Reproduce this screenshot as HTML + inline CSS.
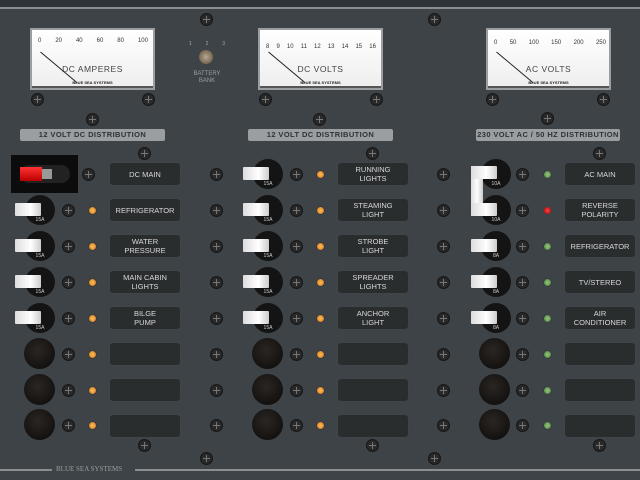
<!DOCTYPE html>
<html><head><meta charset="utf-8"><style>
*{margin:0;padding:0;box-sizing:border-box}
body{width:640px;height:480px;overflow:hidden;background:#3d4347;position:relative;font-family:"Liberation Sans",sans-serif}
.a{position:absolute}
.meter{position:absolute;width:125px;height:62px;background:linear-gradient(#fff,#eee);border:2px solid #9a9ea0;overflow:hidden}
.meter .t{position:absolute;width:100%;text-align:center;top:34px;font-size:8.5px;color:#444;letter-spacing:0.5px}
.meter .b{position:absolute;width:100%;text-align:center;top:50px;font-size:4px;color:#222;font-weight:bold}
.sec{position:absolute;height:12px;background:#9a9ea0;border-radius:2px;color:#2e3336;font-size:7.5px;font-weight:bold;text-align:center;line-height:12px;letter-spacing:0.4px}
.lab{position:absolute;width:70px;height:22px;background:#2a2d2e;border-radius:3px;color:#d8d8d8;font-size:7.5px;text-align:center;display:flex;align-items:center;justify-content:center;line-height:9px;box-shadow:0 0 1px #555}
.scr{position:absolute;width:13px;height:13px;border-radius:50%;background:radial-gradient(#2a2a2a 50%,#111 70%,#666 100%)}
.scr:before,.scr:after{content:"";position:absolute;left:6px;top:3px;width:1px;height:7px;background:#777}
.scr:after{transform:rotate(90deg)}
.led{position:absolute;width:7px;height:7px;border-radius:50%}
.o{background:radial-gradient(#ffc060,#d07010);box-shadow:0 0 1px #000}
.g{background:radial-gradient(#9c6,#475);box-shadow:0 0 1px #000}
.r{background:radial-gradient(#f44,#a00)}
.brk{position:absolute;width:30px;height:30px;border-radius:50%;background:#141414}
.brk span{position:absolute;bottom:2px;width:100%;text-align:center;color:#ccc;font-size:5px}
.tog{position:absolute;width:26px;height:13px;background:linear-gradient(90deg,#ddd,#fff 60%,#ccc);border-radius:1px}
.knob{position:absolute;width:31px;height:31px;border-radius:50%;background:radial-gradient(circle at 45% 40%,#2a2624,#141210 70%,#0a0a0a)}
</style></head><body>
<div class="a" style="left:0;top:0;width:640px;height:7px;background:#2e3437"></div>
<div class="a" style="left:0;top:7px;width:640px;height:2px;background:#8a8e90"></div>
<div class="a" style="left:0;top:469px;width:52px;height:2px;background:#8a8e90"></div>
<div class="a" style="left:135px;top:469px;width:505px;height:2px;background:#8a8e90"></div>
<div class="a" style="left:56px;top:465px;font-family:'Liberation Serif',serif;font-size:7px;color:#9a9ea0">BLUE SEA SYSTEMS</div>

<div class="meter" style="left:30px;top:28px"><div class="a" style="left:6px;top:8px;font-size:6px;color:#333;width:110px;display:flex;justify-content:space-between"><span>0</span><span>20</span><span>40</span><span>60</span><span>80</span><span>100</span></div><div class="t">DC AMPERES</div><div class="b">BLUE SEA SYSTEMS</div><div class="a" style="left:8px;top:22px;width:1px;height:48px;background:#222;transform:rotate(-50deg);transform-origin:top"></div><div class="a" style="left:0;top:56px;width:121px;height:4px;background:#555"></div></div>
<div class="meter" style="left:258px;top:28px"><div class="a" style="left:6px;top:14px;font-size:6px;color:#333;width:110px;display:flex;justify-content:space-between"><span>8</span><span>9</span><span>10</span><span>11</span><span>12</span><span>13</span><span>14</span><span>15</span><span>16</span></div><div class="t">DC VOLTS</div><div class="b">BLUE SEA SYSTEMS</div><div class="a" style="left:8px;top:22px;width:1px;height:48px;background:#222;transform:rotate(-50deg);transform-origin:top"></div><div class="a" style="left:0;top:56px;width:121px;height:4px;background:#555"></div></div>
<div class="meter" style="left:486px;top:28px"><div class="a" style="left:6px;top:10px;font-size:6px;color:#333;width:112px;display:flex;justify-content:space-between"><span>0</span><span>50</span><span>100</span><span>150</span><span>200</span><span>250</span></div><div class="t">AC VOLTS</div><div class="b">BLUE SEA SYSTEMS</div><div class="a" style="left:8px;top:22px;width:1px;height:48px;background:#222;transform:rotate(-50deg);transform-origin:top"></div><div class="a" style="left:0;top:56px;width:121px;height:4px;background:#555"></div></div>

<div class="a" style="left:189px;top:41px;font-size:5px;color:#aaa;width:36px;display:flex;justify-content:space-between"><span>1</span><span>2</span><span>3</span></div>
<div class="a" style="left:199px;top:50px;width:14px;height:14px;border-radius:50%;background:radial-gradient(#b8a890,#5a4a3a)"></div>
<div class="a" style="left:188px;top:71px;width:38px;text-align:center;font-size:6px;color:#9a9ea0;line-height:7px">BATTERY<br>BANK</div>

<div class="sec" style="left:20px;top:129px;width:145px">12 VOLT DC DISTRIBUTION</div>
<div class="sec" style="left:248px;top:129px;width:145px">12 VOLT DC DISTRIBUTION</div>
<div class="sec" style="left:476px;top:129px;width:144px">230 VOLT AC / 50 HZ DISTRIBUTION</div>

<div class="a" style="left:11px;top:155px;width:67px;height:38px;background:#0c0c0c"></div>
<div class="a" style="left:20px;top:165px;width:50px;height:18px;border-radius:9px;background:#222"></div>
<div class="a" style="left:20px;top:167px;width:22px;height:14px;background:linear-gradient(#f33,#b00)"></div>
<div class="a" style="left:42px;top:169px;width:10px;height:10px;background:#999"></div>

<div class="lab" style="left:110px;top:163px">DC MAIN</div>
<div class="lab" style="left:110px;top:199px">REFRIGERATOR</div>
<div class="lab" style="left:110px;top:235px">WATER<br>PRESSURE</div>
<div class="lab" style="left:110px;top:271px">MAIN CABIN<br>LIGHTS</div>
<div class="lab" style="left:110px;top:307px">BILGE<br>PUMP</div>
<div class="lab" style="left:338px;top:163px">RUNNING<br>LIGHTS</div>
<div class="lab" style="left:338px;top:199px">STEAMING<br>LIGHT</div>
<div class="lab" style="left:338px;top:235px">STROBE<br>LIGHT</div>
<div class="lab" style="left:338px;top:271px">SPREADER<br>LIGHTS</div>
<div class="lab" style="left:338px;top:307px">ANCHOR<br>LIGHT</div>
<div class="lab" style="left:565px;top:163px">AC MAIN</div>
<div class="lab" style="left:565px;top:199px">REVERSE<br>POLARITY</div>
<div class="lab" style="left:565px;top:235px">REFRIGERATOR</div>
<div class="lab" style="left:565px;top:271px">TV/STEREO</div>
<div class="lab" style="left:565px;top:307px">AIR<br>CONDITIONER</div>
<div class="lab" style="left:110px;top:343px"></div><div class="lab" style="left:110px;top:379px"></div><div class="lab" style="left:110px;top:415px"></div>
<div class="lab" style="left:338px;top:343px"></div><div class="lab" style="left:338px;top:379px"></div><div class="lab" style="left:338px;top:415px"></div>
<div class="lab" style="left:565px;top:343px"></div><div class="lab" style="left:565px;top:379px"></div><div class="lab" style="left:565px;top:415px"></div>

<div id="d"></div>
<script>
var h='';
function s(x,y){h+='<div class="scr" style="left:'+(x-6)+'px;top:'+(y-6)+'px"></div>';}
[[206,19],[434,19],[37,99],[148,99],[265,99],[376,99],[492,99],[603,99],[92,119],[319,119],[547,118],[144,153],[372,153],[599,153],[144,445],[206,458],[372,445],[434,458],[599,445],[88,174]].forEach(function(p){s(p[0],p[1]);});
var rows=[174,210,246,282,318,354,390,425];
rows.forEach(function(y,i){
 if(i>0)s(68,y);
 s(216,y);s(296,y);s(443,y);s(522,y);
 if(i>0)h+='<div class="led o" style="left:89px;top:'+(y-3)+'px"></div>';
 h+='<div class="led o" style="left:317px;top:'+(y-3)+'px"></div>';
 h+='<div class="led '+(i==1?'r':'g')+'" style="left:544px;top:'+(y-3)+'px"></div>';
 if(i<5){
  var cs=[[268,'15A'],[496,i<2?'10A':'8A']];if(i>0)cs.unshift([40,'15A']);
  cs.forEach(function(c){
   h+='<div class="brk" style="left:'+(c[0]-15)+'px;top:'+(y-15)+'px"><span>'+c[1]+'</span></div>';
   if(!(c[0]==496&&i<2))h+='<div class="tog" style="left:'+(c[0]-25)+'px;top:'+(y-7)+'px"></div>';
  });
 } else {
  [40,268,495].forEach(function(x){h+='<div class="knob" style="left:'+(x-16)+'px;top:'+(y-16)+'px"></div>';});
 }
});
h+='<div class="a" style="left:471px;top:166px;width:12px;height:50px;background:linear-gradient(90deg,#ddd,#fff,#ccc)"></div>';
h+='<div class="tog" style="left:471px;top:166px"></div><div class="tog" style="left:471px;top:203px"></div>';
document.getElementById('d').innerHTML=h;
</script>
</body></html>
